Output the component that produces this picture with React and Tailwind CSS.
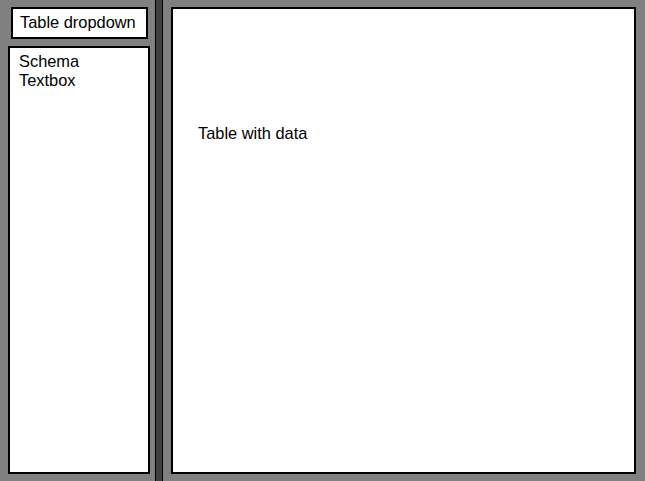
import React from 'react';

const App = () => {
  return (
    <div
      className="flex h-[481px] w-[645px] bg-[#808080] text-[16.4px] leading-[19px] text-black"
      style={{ fontFamily: '"Liberation Sans", Arial, sans-serif' }}
    >
      <div className="flex w-[155px] shrink-0 flex-col pb-[7px]">
        <div className="ml-[11px] mr-[7px] mt-[7px] h-[32px] border-2 border-black bg-white pl-[7px] pt-[4px]">
          Table dropdown
        </div>
        <div className="ml-[8px] mr-[5px] mt-[7px] flex-1 border-2 border-black bg-white pl-[9px] pt-[4px]">
          <div>Schema</div>
          <div>Textbox</div>
        </div>
      </div>

      <div className="w-[8px] shrink-0 border-x border-black bg-[#404040]" />

      <div className="flex flex-1 pb-[7px] pl-[8px] pr-[9px] pt-[7px]">
        <div className="flex-1 border-2 border-black bg-white pl-[25px] pt-[115px]">
          Table with data
        </div>
      </div>
    </div>
  );
};

export default App;
